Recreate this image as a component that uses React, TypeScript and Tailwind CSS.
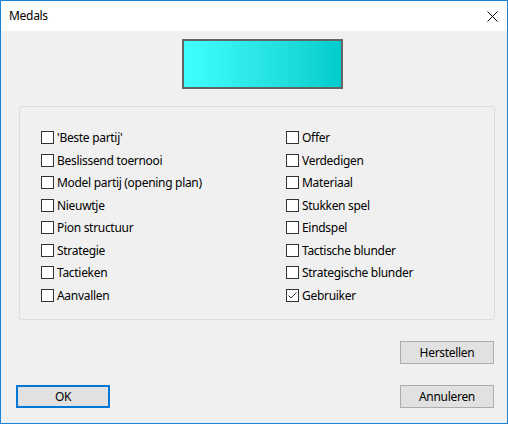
import React, { useState } from 'react';

const left = ["'Beste partij'", 'Beslissend toernooi', 'Model partij (opening plan)', 'Nieuwtje', 'Pion structuur', 'Strategie', 'Tactieken', 'Aanvallen'];
const right = ['Offer', 'Verdedigen', 'Materiaal', 'Stukken spel', 'Eindspel', 'Tactische blunder', 'Strategische blunder', 'Gebruiker'];

const Check: React.FC<{ label: string; checked: boolean; onToggle: () => void }> = ({ label, checked, onToggle }) => (
  <div className="flex items-center h-[13px] cursor-default" onClick={onToggle}>
    <div className="w-[13px] h-[13px] border border-[#333333] bg-white flex items-center justify-center shrink-0">
      {checked && (
        <svg width="11" height="11" viewBox="0 0 11 11">
          <path d="M1.5 5.5 L4 8 L9.5 2.5" fill="none" stroke="#333" strokeWidth="1" />
        </svg>
      )}
    </div>
    <span className="ml-[3px] text-[12px] tracking-[-0.3px] leading-[13px] text-black whitespace-nowrap">{label}</span>
  </div>
);

const Btn: React.FC<{ label: string; primary?: boolean }> = ({ label, primary }) => (
  <button
    className={
      'w-[94px] h-[23px] bg-[#e1e1e1] text-[12px] tracking-[-0.3px] text-black flex items-center justify-center ' +
      (primary ? 'border-2 border-[#0078d7]' : 'border border-[#adadad]')
    }
  >
    {label}
  </button>
);

export default function App() {
  const [checks, setChecks] = useState<Record<string, boolean>>({ Gebruiker: true });
  const toggle = (k: string) => setChecks({ ...checks, [k]: !checks[k] });

  return (
    <div className="w-[508px] h-[424px] border border-[#1883d7] bg-[#f0f0f0] flex flex-col" style={{ fontFamily: '"Noto Sans", sans-serif' }}>
      <div className="h-[30px] bg-white flex items-center justify-between pl-[8px] pr-[9px] shrink-0">
        <span className="text-[12px] tracking-[-0.3px] text-black">Medals</span>
        <svg width="11" height="11" viewBox="0 0 11 11">
          <path d="M0.5 0.5 L10.5 10.5 M10.5 0.5 L0.5 10.5" stroke="#000" strokeWidth="1" />
        </svg>
      </div>
      <div className="flex flex-col">
        <div className="mt-[8px] ml-[181px] w-[161px] h-[50px] border-2 border-[#646464] bg-gradient-to-r from-[#3ffffd] to-[#00cccc]" />
        <div className="mt-[17px] ml-[18px] mr-[12px] h-[214px] border border-[#dcdcdc] rounded-[3px] pt-[24px] pl-[21px] flex">
          <div className="w-[245px] flex flex-col gap-[9.5px]">
            {left.map(l => (
              <Check key={l} label={l} checked={!!checks[l]} onToggle={() => toggle(l)} />
            ))}
          </div>
          <div className="flex flex-col gap-[9.5px]">
            {right.map(l => (
              <Check key={l} label={l} checked={!!checks[l]} onToggle={() => toggle(l)} />
            ))}
          </div>
        </div>
        <div className="mt-[21px] mr-[13px] flex justify-end">
          <Btn label="Herstellen" />
        </div>
        <div className="mt-[21px] ml-[15px] mr-[13px] flex justify-between">
          <Btn label="OK" primary />
          <Btn label="Annuleren" />
        </div>
      </div>
    </div>
  );
}
